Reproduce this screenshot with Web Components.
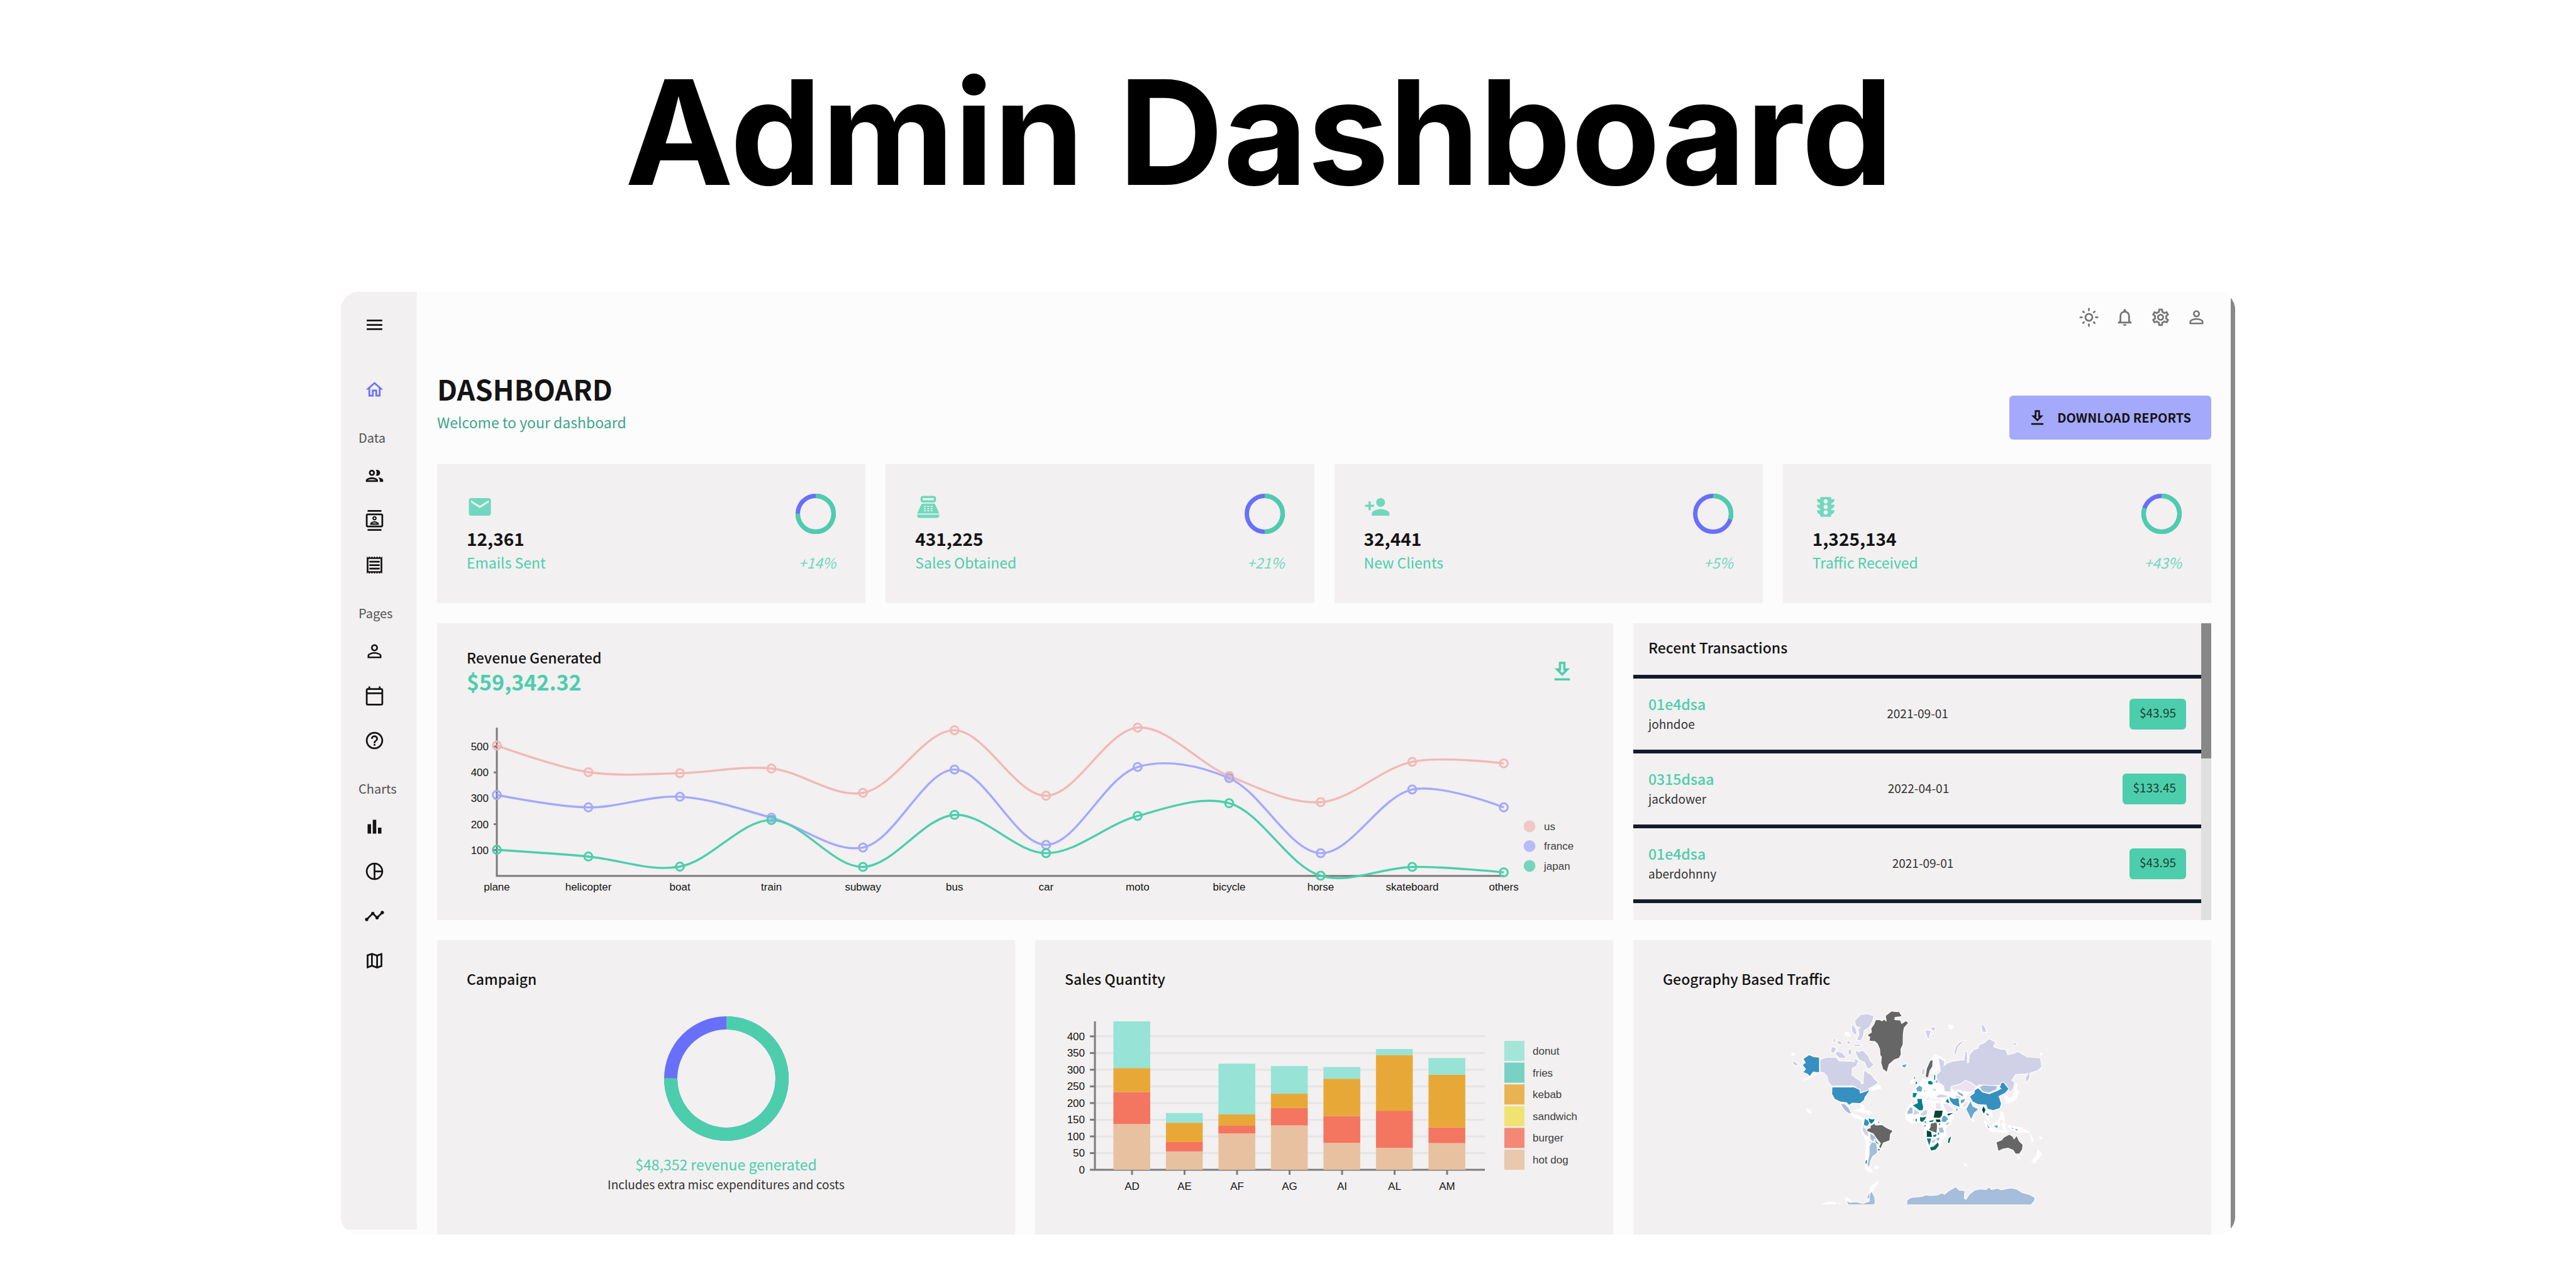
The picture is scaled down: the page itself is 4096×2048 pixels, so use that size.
<!DOCTYPE html>
<html lang="en">
<head>
<meta charset="utf-8">
<title>Admin Dashboard</title>
<style>
  html { background: #ffffff; }
  body { margin: 0; font-family: "Noto Sans CJK JP", "Noto Sans", sans-serif; color: #141414; }
</style>
</head>
<body>
<dashboard-page></dashboard-page>

<script>
const ICONS = {
  menu: 'M3 18h18v-2H3v2zm0-5h18v-2H3v2zm0-7v2h18V6H3z',
  home: 'm12 5.69 5 4.5V18h-2v-6H9v6H7v-7.81l5-4.5M12 3 2 12h3v8h6v-6h2v6h6v-8h3L12 3z',
  people: 'M9 13.75c-2.34 0-7 1.17-7 3.5V19h14v-1.75c0-2.33-4.66-3.5-7-3.5zM4.34 17c.84-.58 2.87-1.25 4.66-1.25s3.82.67 4.66 1.25H4.34zM9 12c1.93 0 3.5-1.57 3.5-3.5S10.93 5 9 5 5.5 6.57 5.5 8.5 7.07 12 9 12zm0-5c.83 0 1.5.67 1.5 1.5S9.83 10 9 10s-1.5-.67-1.5-1.5S8.17 7 9 7zm7.04 6.81c1.16.84 1.96 1.96 1.96 3.44V19h4v-1.75c0-2.02-3.5-3.17-5.96-3.44zM15 12c1.93 0 3.5-1.57 3.5-3.5S16.93 5 15 5c-.54 0-1.04.13-1.5.35.63.89 1 1.98 1 3.15s-.37 2.26-1 3.15c.46.22.96.35 1.5.35z',
  contacts: 'M20 4H4c-1.1 0-2 .9-2 2v12c0 1.1.9 2 2 2h16c1.1 0 2-.9 2-2V6c0-1.1-.9-2-2-2zm0 14H4V6h16v12zM4 0h16v2H4zm0 22h16v2H4zm8-10c1.38 0 2.5-1.12 2.5-2.5S13.38 7 12 7 9.5 8.12 9.5 9.5 10.62 12 12 12zm0-3.5c.55 0 1 .45 1 1s-.45 1-1 1-1-.45-1-1 .45-1 1-1zm5 7.49C17 13.9 13.69 13 12 13s-5 .9-5 2.99V17h10v-1.01zm-8.19-.49c.61-.52 2.03-1 3.19-1 1.17 0 2.59.48 3.2 1H8.81z',
  receipt: 'M19.5 3.5 18 2l-1.5 1.5L15 2l-1.5 1.5L12 2l-1.5 1.5L9 2 7.5 3.5 6 2 4.5 3.5 3 2v20l1.5-1.5L6 22l1.5-1.5L9 22l1.5-1.5L12 22l1.5-1.5L15 22l1.5-1.5L18 22l1.5-1.5L21 22V2l-1.5 1.5zM19 19.09H5V4.91h14v14.18zM6 15h12v2H6zm0-4h12v2H6zm0-4h12v2H6z',
  person: 'M12 5.9c1.16 0 2.1.94 2.1 2.1s-.94 2.1-2.1 2.1S9.9 9.16 9.9 8s.94-2.1 2.1-2.1m0 9c2.97 0 6.1 1.46 6.1 2.1v1.1H5.9V17c0-.64 3.13-2.1 6.1-2.1M12 4C9.79 4 8 5.79 8 8s1.79 4 4 4 4-1.79 4-4-1.79-4-4-4zm0 9c-2.67 0-8 1.34-8 4v3h16v-3c0-2.66-5.33-4-8-4z',
  calendar: 'M20 3h-1V1h-2v2H7V1H5v2H4c-1.1 0-2 .9-2 2v16c0 1.1.9 2 2 2h16c1.1 0 2-.9 2-2V5c0-1.1-.9-2-2-2zm0 18H4V10h16v11zm0-13H4V5h16v3z',
  help: 'M11 18h2v-2h-2v2zm1-16C6.48 2 2 6.48 2 12s4.48 10 10 10 10-4.48 10-10S17.52 2 12 2zm0 18c-4.41 0-8-3.59-8-8s3.59-8 8-8 8 3.59 8 8-3.59 8-8 8zm0-14c-2.21 0-4 1.79-4 4h2c0-1.1.9-2 2-2s2 .9 2 2c0 2-3 1.75-3 5h2c0-2.25 3-2.5 3-5 0-2.21-1.79-4-4-4z',
  bars: 'M4 9h4v11H4zm12 4h4v7h-4zm-6-9h4v16h-4z',
  pie: 'M12 2C6.48 2 2 6.48 2 12s4.48 10 10 10 10-4.48 10-10S17.52 2 12 2zm1 2.07c3.61.45 6.48 3.33 6.93 6.93H13V4.07zM4 12c0-4.06 3.07-7.44 7-7.93v15.87c-3.93-.5-7-3.88-7-7.94zm9 7.93V13h6.93c-.45 3.61-3.32 6.48-6.93 6.93z',
  timeline: 'M23 8c0 1.1-.9 2-2 2-.18 0-.35-.02-.51-.07l-3.56 3.55c.05.16.07.34.07.52 0 1.1-.9 2-2 2s-2-.9-2-2c0-.18.02-.36.07-.52l-2.55-2.55c-.16.05-.34.07-.52.07s-.36-.02-.52-.07l-4.55 4.56c.05.16.07.33.07.51 0 1.1-.9 2-2 2s-2-.9-2-2 .9-2 2-2c.18 0 .35.02.51.07l4.56-4.55C8.02 9.36 8 9.18 8 9c0-1.1.9-2 2-2s2 .9 2 2c0 .18-.02.36-.07.52l2.55 2.55c.16-.05.34-.07.52-.07s.36.02.52.07l3.55-3.56C19.02 8.35 19 8.18 19 8c0-1.1.9-2 2-2s2 .9 2 2z',
  map: 'M20.5 3l-.16.03L15 5.1 9 3 3.36 4.9c-.21.07-.36.25-.36.48V20.5c0 .28.22.5.5.5l.16-.03L9 18.9l6 2.1 5.64-1.9c.21-.07.36-.25.36-.48V3.5c0-.28-.22-.5-.5-.5zM10 5.47l4 1.4v11.66l-4-1.4V5.47zm-5 .99l3-1.01v11.7l-3 1.16V6.46zm14 11.08l-3 1.01V6.86l3-1.16v11.84z',
  sun: 'M12 9c1.65 0 3 1.35 3 3s-1.35 3-3 3-3-1.35-3-3 1.35-3 3-3m0-2c-2.76 0-5 2.24-5 5s2.24 5 5 5 5-2.24 5-5-2.24-5-5-5zM2 13h2c.55 0 1-.45 1-1s-.45-1-1-1H2c-.55 0-1 .45-1 1s.45 1 1 1zm18 0h2c.55 0 1-.45 1-1s-.45-1-1-1h-2c-.55 0-1 .45-1 1s.45 1 1 1zM11 2v2c0 .55.45 1 1 1s1-.45 1-1V2c0-.55-.45-1-1-1s-1 .45-1 1zm0 18v2c0 .55.45 1 1 1s1-.45 1-1v-2c0-.55-.45-1-1-1s-1 .45-1 1zM5.99 4.58c-.39-.39-1.03-.39-1.41 0-.39.39-.39 1.03 0 1.41l1.06 1.06c.39.39 1.03.39 1.41 0s.39-1.03 0-1.41L5.99 4.58zm12.37 12.37c-.39-.39-1.03-.39-1.41 0-.39.39-.39 1.03 0 1.41l1.06 1.06c.39.39 1.03.39 1.41 0 .39-.39.39-1.03 0-1.41l-1.06-1.06zm1.06-10.96c.39-.39.39-1.03 0-1.41-.39-.39-1.03-.39-1.41 0l-1.06 1.06c-.39.39-.39 1.03 0 1.41s1.03.39 1.41 0l1.06-1.06zM7.05 18.36c.39-.39.39-1.03 0-1.41-.39-.39-1.03-.39-1.41 0l-1.06 1.06c-.39.39-.39 1.03 0 1.41s1.03.39 1.41 0l1.06-1.06z',
  bell: 'M12 22c1.1 0 2-.9 2-2h-4c0 1.1.9 2 2 2zm6-6v-5c0-3.07-1.63-5.64-4.5-6.32V4c0-.83-.67-1.5-1.5-1.5s-1.5.67-1.5 1.5v.68C7.64 5.36 6 7.92 6 11v5l-2 2v1h16v-1l-2-2zm-2 1H8v-6c0-2.48 1.51-4.5 4-4.5s4 2.02 4 4.5v6z',
  gear: 'M19.43 12.98c.04-.32.07-.64.07-.98 0-.34-.03-.66-.07-.98l2.11-1.65c.19-.15.24-.42.12-.64l-2-3.46c-.09-.16-.26-.25-.44-.25-.06 0-.12.01-.17.03l-2.49 1c-.52-.4-1.08-.73-1.69-.98l-.38-2.65C14.46 2.18 14.25 2 14 2h-4c-.25 0-.46.18-.49.42l-.38 2.65c-.61.25-1.17.59-1.69.98l-2.49-1c-.06-.02-.12-.03-.18-.03-.17 0-.34.09-.43.25l-2 3.46c-.13.22-.07.49.12.64l2.11 1.65c-.04.32-.07.65-.07.98 0 .33.03.66.07.98l-2.11 1.65c-.19.15-.24.42-.12.64l2 3.46c.09.16.26.25.44.25.06 0 .12-.01.17-.03l2.49-1c.52.4 1.08.73 1.69.98l.38 2.65c.03.24.24.42.49.42h4c.25 0 .46-.18.49-.42l.38-2.65c.61-.25 1.17-.59 1.69-.98l2.49 1c.06.02.12.03.18.03.17 0 .34-.09.43-.25l2-3.46c.12-.22.07-.49-.12-.64l-2.11-1.65zm-1.98-1.71c.04.31.05.52.05.73 0 .21-.02.43-.05.73l-.14 1.13.89.7 1.08.84-.7 1.21-1.27-.51-1.04-.42-.9.68c-.43.32-.84.56-1.25.73l-1.06.43-.16 1.13-.2 1.35h-1.4l-.19-1.35-.16-1.13-1.06-.43c-.43-.18-.83-.41-1.23-.71l-.91-.7-1.06.43-1.27.51-.7-1.21 1.08-.84.89-.7-.14-1.13c-.03-.31-.05-.54-.05-.74s.02-.43.05-.73l.14-1.13-.89-.7-1.08-.84.7-1.21 1.27.51 1.04.42.9-.68c.43-.32.84-.56 1.25-.73l1.06-.43.16-1.13.2-1.35h1.39l.19 1.35.16 1.13 1.06.43c.43.18.83.41 1.23.71l.91.7 1.06-.43 1.27-.51.7 1.21-1.07.85-.89.7.14 1.13zM12 8c-2.21 0-4 1.79-4 4s1.79 4 4 4 4-1.79 4-4-1.79-4-4-4zm0 6c-1.1 0-2-.9-2-2s.9-2 2-2 2 .9 2 2-.9 2-2 2z',
  download: 'M19 9h-4V3H9v6H5l7 7 7-7zm-8 2V5h2v6h1.17L12 13.17 9.83 11H11zm-6 7h14v2H5z',
  email: 'M20 4H4c-1.1 0-1.99.9-1.99 2L2 18c0 1.1.9 2 2 2h16c1.1 0 2-.9 2-2V6c0-1.1-.9-2-2-2zm0 4-8 5-8-5V6l8 5 8-5v2z',
  sale: 'M17 2H7c-1.1 0-2 .9-2 2v2c0 1.1.9 2 2 2h10c1.1 0 2-.9 2-2V4c0-1.1-.9-2-2-2zm0 4H7V4h10v2zm3 16H4c-1.1 0-2-.9-2-2v-1h20v1c0 1.1-.9 2-2 2zm-1.47-11.81C18.21 9.47 17.49 9 16.7 9H7.3c-.79 0-1.51.47-1.83 1.19L2 18h20l-3.47-7.81zM9.5 16h-1c-.28 0-.5-.22-.5-.5s.22-.5.5-.5h1c.28 0 .5.22.5.5s-.22.5-.5.5zm0-2h-1c-.28 0-.5-.22-.5-.5s.22-.5.5-.5h1c.28 0 .5.22.5.5s-.22.5-.5.5zm0-2h-1c-.28 0-.5-.22-.5-.5s.22-.5.5-.5h1c.28 0 .5.22.5.5s-.22.5-.5.5zm3 4h-1c-.28 0-.5-.22-.5-.5s.22-.5.5-.5h1c.28 0 .5.22.5.5s-.22.5-.5.5zm0-2h-1c-.28 0-.5-.22-.5-.5s.22-.5.5-.5h1c.28 0 .5.22.5.5s-.22.5-.5.5zm0-2h-1c-.28 0-.5-.22-.5-.5s.22-.5.5-.5h1c.28 0 .5.22.5.5s-.22.5-.5.5zm3 4h-1c-.28 0-.5-.22-.5-.5s.22-.5.5-.5h1c.28 0 .5.22.5.5s-.22.5-.5.5zm0-2h-1c-.28 0-.5-.22-.5-.5s.22-.5.5-.5h1c.28 0 .5.22.5.5s-.22.5-.5.5zm0-2h-1c-.28 0-.5-.22-.5-.5s.22-.5.5-.5h1c.28 0 .5.22.5.5s-.22.5-.5.5z',
  addPerson: 'M15 12c2.21 0 4-1.79 4-4s-1.79-4-4-4-4 1.79-4 4 1.79 4 4 4zm-9-2V7H4v3H1v2h3v3h2v-3h3v-2H6zm9 4c-2.67 0-8 1.34-8 4v2h16v-2c0-2.66-5.33-4-8-4z',
  traffic: 'M20 10h-3V8.86c1.72-.45 3-2 3-3.86h-3V4c0-.55-.45-1-1-1H8c-.55 0-1 .45-1 1v1H4c0 1.86 1.28 3.41 3 3.86V10H4c0 1.86 1.28 3.41 3 3.86V15H4c0 1.86 1.28 3.41 3 3.86V20c0 .55.45 1 1 1h8c.55 0 1-.45 1-1v-1.14c1.72-.45 3-2 3-3.86h-3v-1.14c1.72-.45 3-2 3-3.86zm-8 9c-1.11 0-2-.9-2-2s.89-2 2-2c1.1 0 2 .9 2 2s-.89 2-2 2zm0-5c-1.11 0-2-.9-2-2s.89-2 2-2c1.1 0 2 .9 2 2s-.89 2-2 2zm0-5c-1.11 0-2-.9-2-2 0-1.11.89-2 2-2 1.1 0 2 .89 2 2 0 1.1-.89 2-2 2z'
};

const define = (name, render) => customElements.define(name, class extends HTMLElement {
  constructor() {
    super();
    this.attachShadow({ mode: 'open' });
  }
  connectedCallback() {
    const template = document.createElement('template');
    template.innerHTML = '<style>*{box-sizing:border-box}:host{display:block}</style>' + render(this);
    this.shadowRoot.replaceChildren(template.content.cloneNode(true));
  }
});

define('app-icon', el => `
  <style>
    :host { display: block; flex: none; width: var(--icon-size, 33px); height: var(--icon-size, 33px); }
    svg { display: block; width: 100%; height: 100%; fill: currentColor; }
  </style>
  <svg viewBox="0 0 24 24" aria-hidden="true"><path d="${ICONS[el.getAttribute('name')]}"/></svg>`);

/* Ring whose green share starts at twelve o'clock and runs clockwise. */
define('progress-ring', el => {
  const size = +el.getAttribute('size');
  const band = +el.getAttribute('band');
  const share = +el.getAttribute('share');
  const r = (size - band) / 2;
  const c = 2 * Math.PI * r;
  return `
  <style>
    :host { width: ${size}px; height: ${size}px; flex: none; }
    svg { display: block; fill: none; stroke-width: ${band}px; }
  </style>
  <svg width="${size}" height="${size}" viewBox="0 0 ${size} ${size}" aria-hidden="true">
    <circle cx="${size / 2}" cy="${size / 2}" r="${r}" stroke="#6870fa"/>
    <circle cx="${size / 2}" cy="${size / 2}" r="${r}" stroke="#4cceac"
      stroke-dasharray="${c * share} ${c}" transform="rotate(-90 ${size / 2} ${size / 2})"/>
  </svg>`;
});

define('side-nav', () => {
  const link = (icon, label, active) =>
    `<a href="#" aria-label="${label}"${active ? ' class="active"' : ''}><app-icon name="${icon}"></app-icon></a>`;
  return `
  <style>
    :host { width: 121px; flex: none; background: #f2f0f0; margin-bottom: 8px; }
    nav { display: flex; flex-direction: column; padding-top: 17px; }
    button, a { display: flex; align-items: center; height: 71px; padding: 0 0 0 37px; margin: 0;
      border: 0; background: none; color: #141414; }
    button { margin-bottom: 32px; }
    .active { color: #6870fa; }
    h6 { margin: 0; height: 66px; padding: 22px 0 0 28px; font-size: 20px; line-height: 38px;
      font-weight: 400; color: #525252; }
  </style>
  <nav aria-label="Main">
    <button type="button" aria-label="Collapse menu"><app-icon name="menu"></app-icon></button>
    ${link('home', 'Home', true)}
    <h6>Data</h6>
    ${link('people', 'Team')}${link('contacts', 'Contacts')}${link('receipt', 'Invoices')}
    <h6>Pages</h6>
    ${link('person', 'Profile')}${link('calendar', 'Calendar')}${link('help', 'Help')}
    <h6>Charts</h6>
    ${link('bars', 'Bar chart')}${link('pie', 'Pie chart')}${link('timeline', 'Line chart')}${link('map', 'Geography')}
  </nav>`;
});

define('top-bar', () => `
  <style>
    :host { display: flex; justify-content: flex-end; padding: 12px 26px 0 0; }
    button { border: 0; margin: 0; background: none; padding: 12px; color: #757575; }
  </style>
  <button type="button" aria-label="Theme"><app-icon name="sun"></app-icon></button>
  <button type="button" aria-label="Notifications"><app-icon name="bell"></app-icon></button>
  <button type="button" aria-label="Settings"><app-icon name="gear"></app-icon></button>
  <button type="button" aria-label="Account"><app-icon name="person"></app-icon></button>`);

define('page-header', () => `
  <style>
    :host { display: flex; justify-content: space-between; align-items: flex-end; }
    h2 { margin: 0; font-size: 45px; line-height: 64px; font-weight: 700; color: #141414; }
    p { margin: 3px 0 10px; font-size: 23px; line-height: 36px; color: #3da58a; }
    button { display: flex; align-items: center; gap: 15px; height: 70px; padding: 0 32px 0 28px; border: 0;
      border-radius: 6px; background: #a4a9fc; color: #141414; font: 700 20px/34px "Noto Sans CJK JP", sans-serif; }
  </style>
  <div>
    <h2><slot name="title"></slot></h2>
    <p><slot name="subtitle"></slot></p>
  </div>
  <button type="button"><app-icon name="download"></app-icon><slot name="action"></slot></button>`);

define('stat-card', el => `
  <style>
    :host { display: flex; justify-content: space-between; align-items: center; grid-column: span 3;
      padding: 0 47px; background: #f2f0f0; }
    div { display: flex; flex-direction: column; }
    app-icon { --icon-size: 42px; color: #70d8bd; margin-bottom: 9px; }
    strong { font-size: 28px; line-height: 40px; font-weight: 700; color: #141414; }
    span { font-size: 23px; line-height: 36px; color: #4cceac; }
    .right { align-items: flex-end; gap: 27px; }
    em { font-size: 23px; line-height: 36px; color: #70d8bd; }
  </style>
  <div>
    <app-icon name="${el.getAttribute('icon')}"></app-icon>
    <strong>${el.getAttribute('value')}</strong>
    <span><slot></slot></span>
  </div>
  <div class="right">
    <progress-ring size="64" band="7" share="${el.getAttribute('share')}"></progress-ring>
    <em>${el.getAttribute('increase')}</em>
  </div>`);

define('panel-card', () => `
  <style>
    :host { display: flex; flex-direction: column; grid-column: span 4; background: #f2f0f0; }
    h5 { margin: 0; padding: 45px 47px 1px; font-size: 23px; line-height: 32px; font-weight: 500; color: #141414; }
  </style>
  <h5><slot name="heading"></slot></h5>
  <slot></slot>`);

/* Centripetal Catmull-Rom spline written as cubic segments. */
const spline = pts => {
  const dist = (a, b) => Math.hypot(a[0] - b[0], a[1] - b[1]);
  let d = `M${pts[0]}`;
  for (let i = 0; i < pts.length - 1; i++) {
    const p0 = pts[i - 1] || pts[i], p1 = pts[i], p2 = pts[i + 1], p3 = pts[i + 2] || p2;
    const l1 = dist(p0, p1), l2 = dist(p1, p2), l3 = dist(p2, p3);
    const a1 = Math.sqrt(l1), a2 = Math.sqrt(l2), a3 = Math.sqrt(l3);
    const c1 = [0, 1].map(k => l1 < 1e-6 ? p1[k]
      : (p1[k] * (2 * l1 + 3 * a1 * a2 + l2) - p0[k] * l2 + p2[k] * l1) / (3 * a1 * (a1 + a2)));
    const c2 = [0, 1].map(k => l3 < 1e-6 ? p2[k]
      : (p2[k] * (2 * l3 + 3 * a3 * a2 + l2) + p1[k] * l3 - p3[k] * l2) / (3 * a3 * (a3 + a2)));
    d += `C${c1} ${c2} ${p2}`;
  }
  return d;
};

const CHART_STYLE = `
  svg { display: block; width: 100%; font-family: "Liberation Sans", sans-serif; font-size: 17px; }
  text { fill: #141414; }
  .legend text { fill: #404040; }
  .axis { stroke: #7c7c7c; stroke-width: 3px; fill: none; }
  .grid { stroke: #e5e5e5; stroke-width: 3px; }
  .mid { text-anchor: middle; }
  .end { text-anchor: end; }`;

define('line-chart', () => {
  const names = ['plane', 'helicopter', 'boat', 'train', 'subway', 'bus', 'car', 'moto', 'bicycle', 'horse', 'skateboard', 'others'];
  const series = [
    ['us', '#f1b9b7', [504, 401, 397, 415, 321, 563, 310, 573, 386, 285, 441, 435]],
    ['france', '#a4a9fc', [313, 265, 306, 225, 110, 411, 120, 421, 378, 88, 334, 265]],
    ['japan', '#4cceac', [101, 75, 36, 216, 35, 236, 88, 232, 281, 1, 35, 14]]
  ];
  const left = 95, right = 1697, base = 286, unit = 236 / 573;
  const x = i => left + i * (right - left) / 11;
  const y = v => base - v * unit;
  return `
  <style>${CHART_STYLE}</style>
  <svg viewBox="0 0 1871 356" role="img" aria-label="Revenue by transport and country">
    <path class="axis" d="M${left} 50V${base}H${right}"/>
    ${[100, 200, 300, 400, 500].map(v => `
      <path class="axis" d="M${left - 5} ${y(v)}h5"/>
      <text class="end" x="${left - 13}" y="${y(v) + 6}">${v}</text>`).join('')}
    ${names.map((n, i) => `<text class="mid" x="${x(i)}" y="309">${n}</text>`).join('')}
    ${series.map(([, colour, values]) => {
      const pts = values.map((v, i) => [x(i), y(v)]);
      return `<path d="${spline(pts)}" fill="none" stroke="${colour}" stroke-width="3.4"/>`;
    }).join('')}
    ${series.map(([, colour, values]) => values.map((v, i) =>
      `<circle cx="${x(i)}" cy="${y(v)}" r="6.4" fill="none" stroke="${colour}" stroke-width="3"/>`).join('')).join('')}
    <g class="legend">
      ${series.map(([n, colour], i) => `
        <circle cx="1738" cy="${207 + i * 31.5}" r="9.4" fill="${colour}" opacity=".75"/>
        <text x="1761" y="${213 + i * 31.5}">${n}</text>`).join('')}
    </g>
  </svg>`;
});

define('bar-chart', () => {
  const colours = { 'hot dog': '#e8c1a0', burger: '#f47560', sandwich: '#f1e15b', kebab: '#e8a838', fries: '#61cdbb', donut: '#97e3d5' };
  const data = { AD: [137, 96, 72, 140], AE: [55, 28, 58, 29], AF: [109, 23, 34, 152], AG: [133, 52, 43, 83],
    AI: [81, 80, 112, 35], AL: [66, 111, 167, 18], AM: [80, 47, 158, 50] };
  const fills = ['hot dog', 'burger', 'kebab', 'donut'].map(k => colours[k]);
  const left = 95, right = 715, base = 287, unit = 236 / 445;
  const y = v => base - v * unit;
  const ticks = [0, 50, 100, 150, 200, 250, 300, 350, 400];
  return `
  <style>${CHART_STYLE}</style>
  <svg viewBox="0 0 919 389" role="img" aria-label="Sales quantity by country">
    ${ticks.slice(1).map(v => `<path class="grid" d="M${left} ${y(v)}H${right}"/>`).join('')}
    <path class="axis" d="M${left} 51V${base}H${right}"/>
    ${Object.values(data).map((values, i) => {
      let sum = 0;
      return values.map((v, k) => {
        sum += v;
        return `<rect x="${124.4 + i * 83.5}" y="${y(sum)}" width="58.5" height="${v * unit}" fill="${fills[k]}"/>`;
      }).join('');
    }).join('')}
    ${ticks.map(v => `
      <path class="axis" d="M${left} ${y(v)}h-8"/>
      <text class="end" x="${left - 16}" y="${y(v) + 6}">${v}</text>`).join('')}
    ${Object.keys(data).map((n, i) => `
      <path class="axis" d="M${154 + i * 83.5} ${base}v8"/>
      <text class="mid" x="${154 + i * 83.5}" y="319">${n}</text>`).join('')}
    <g class="legend">
      ${Object.entries(colours).reverse().map(([n, colour], i) => `
        <rect x="746" y="${82 + i * 34.6}" width="32" height="32" fill="${colour}" opacity=".85"/>
        <text x="791" y="${104 + i * 34.6}">${n}</text>`).join('')}
    </g>
  </svg>`;
});

define('world-map', () => {
  const land = {
    '#ffffff': 'M750 780L800 750L820 770L900 778L925 850L940 855L945 880L925 925L905 945L908 1000L885 1030L880 1075L845 1100L830 1080L812 1000L805 920L790 912L745 912L722 885L727 830ZM755 715L775 670L800 640L800 625L822 638L850 620L865 600L905 665L930 680L985 700L1020 712L1000 740L990 760L1010 775L1000 812L980 812L930 775L905 760L900 780L890 760L868 750L840 752L830 735L815 745L795 722L775 752L750 750ZM845 490L860 470L905 500L900 515L870 500ZM465 853L500 870L525 890L518 895L480 875ZM485 833L510 825L558 846L548 853L520 843ZM510 798l14 2l2 25l-8 -5ZM550 885L605 915L600 930L560 920ZM525 900L520 955L545 1015L555 1030L545 1190L565 1238L545 1235L533 1200L540 1050L515 960ZM243 635L268 610L298 600L262 625ZM258 825l14 10l5 14l-10 -6ZM1100 835L1120 845L1125 870L1105 880L1112 905L1095 880ZM1090 905L1130 960L1195 970L1190 980L1120 968L1095 930ZM1130 925L1155 905L1160 940L1145 955L1130 945ZM1170 920l18 0l-5 20l8 18l-14 -8ZM1165 845L1178 850L1182 905L1170 885L1155 900L1168 870ZM1200 935L1260 950L1300 978L1280 972L1245 972L1215 955ZM1240 660L1235 700L1248 710L1235 760L1200 782L1190 765L1222 750L1232 705ZM1185 730l12 10l0 25l-10 -5ZM1340 1095L1356 1120L1325 1175L1312 1168L1335 1130ZM580 1200l12 5l-4 10l-12 -2ZM1306 1000l12 30l-6 8ZM1350 1008l8 4l-8 8ZM330 1450L365 1435L415 1450L412 1455L330 1455ZM555 1365L558 1340L592 1303L575 1335L568 1360ZM440 1410l20 8l5 20l-20 -8ZM922 275l20 0l-2 18l-12 5ZM190 458l12 2l-4 10l-8 -2ZM585 670l15 5l4 15l-18 -5ZM548 695L580 680L588 690L560 700ZM1000 1185l6 6l-8 4ZM1352 458l8 5l-8 6ZM745 640l10 -8l-2 22l-8 0ZM440 320L455 325L460 345L440 338ZM1035 895l6 8l-8 0ZM1245 1135l8 10l-6 6Z',
    '#fff7fb': 'M850 495L868 498L872 560L850 588L845 550ZM808 785L855 785L855 888L832 882L820 830L805 815ZM855 660L885 660L903 672L890 690L865 680ZM800 645L820 645L822 665L805 670Z',
    '#ece2f0': 'M932 678L978 660L985 640L1000 632L1030 655L1052 675L1040 700L1020 712L985 705L965 695L950 708ZM862 785h20l5 38h-25ZM895 790L915 787L945 825L940 838L915 848L905 820ZM985 805L1000 780L1012 773L1008 800L990 814ZM752 890l8 -5l2 18l-8 0Z',
    '#d0d1e6': 'M512 205L545 200L572 215L565 245L550 285L525 308L522 345L510 374L493 368L505 335L500 300L512 290L490 278L483 245ZM470 270L485 290L492 320L485 337L470 312ZM322 500L350 487L395 487L410 510L460 512L495 515L490 540L470 555L468 600L490 625L508 640L514 662L524 658L524 620L528 570L545 590L560 600L575 630L592 650L570 672L545 690L555 697L530 715L512 725L505 700L480 670L375 670L360 645L355 610L340 585L322 580ZM487 440L500 450L520 440L545 475L555 510L572 530L550 560L540 550L530 515L505 500L490 465ZM400 445L425 458L442 488L412 490L393 462ZM376 416L396 425L385 455L372 450ZM480 400L515 403L500 412L480 408ZM410 375L425 395L410 400L400 385ZM385 365l8 0l-5 18l-8 2ZM450 375l12 10l-4 15l-10 -8ZM455 430l12 8l-2 30l-12 -8ZM480 495l15 5l6 20l-15 -5ZM192 510L205 515L218 530L210 540L198 530ZM812 308L838 310L827 368ZM838 288l20 0l0 15l-10 8ZM845 335l10 10l-6 10ZM797 590L800 565L810 558L808 590L800 600ZM1078 268L1090 285L1098 315L1082 318L1076 290ZM1102 322l10 6l-4 14ZM1224 388l16 8l-12 10ZM875 490L902 510L898 545L915 525L940 512L975 505L995 505L1000 450L1008 445L1008 525L1018 515L1020 470L1040 435L1060 428L1065 405L1090 390L1110 365L1140 385L1130 415L1160 432L1188 435L1197 470L1230 460L1245 448L1290 485L1350 490L1356 545L1340 568L1305 585L1280 592L1235 595L1215 635L1230 650L1222 690L1210 712L1200 690L1190 655L1175 650L1160 665L1110 670L1065 662L1052 675L1030 650L1000 632L980 655L932 675L930 712L903 705L900 672L868 640L866 600L885 575L880 530ZM1300 580L1300 620L1285 648L1282 620ZM948 462L955 415L972 388L997 373L965 415L955 465ZM866 740L880 728L915 736L912 746L870 748ZM955 735L980 745L975 755L955 745ZM748 787L768 763L758 785ZM758 865L762 822L785 850L770 860ZM790 860L812 828L822 838L818 862L800 870ZM522 940L540 962L548 1005L530 990L518 960ZM845 1030l12 -8l5 10l-12 18l-8 -5ZM848 690l14 2l0 10l-12 0ZM530 935l-8 8l-4 -8Z',
    '#a6bddb': 'M1068 680L1085 668L1148 675L1145 695L1110 716L1080 707ZM418 790L435 792L455 820L466 853L450 848L430 820ZM730 840L742 813L753 815V852L728 857ZM875 945h18l8 32l-22 3ZM865 1015l14 -5l0 18l-12 5ZM555 985L578 1005L582 1022L565 1037L556 1015ZM562 1043L583 1045L588 1110L565 1135L555 1165L550 1203L542 1190L552 1120L552 1070ZM860 640l8 -8l6 18l-12 2ZM728 1453L728 1425L745 1408L800 1400L815 1390L835 1395L870 1392L890 1378L902 1387L925 1362L955 1338L970 1358L996 1363L993 1410L1003 1422L1020 1385L1045 1358L1070 1352L1098 1355L1110 1340L1122 1355L1150 1347L1168 1357L1212 1345L1240 1352L1265 1375L1300 1388L1325 1408L1320 1430L1305 1453ZM445 1428L460 1440L490 1436L520 1447L552 1432L555 1380L562 1368L575 1405L577 1440L570 1453L455 1453ZM540 1415L550 1375L552 1405ZM398 1448l10 0l2 5l-12 0Z',
    '#67a9cf': 'M706 535l20 -5l-8 22l-12 -7ZM770 688L785 670L798 682L795 710L775 708ZM1024 775L1035 808L1060 825L1040 850L1027 890L1017 860L1005 825ZM978 765L1000 757L992 780L980 787ZM960 708L988 728L990 742L972 728ZM895 870L905 868L920 890L905 910L888 905ZM910 920l18 -12l-15 22ZM1098 850l14 8l-6 10l-8 -6ZM1133 935l20 -5l-5 20ZM1215 945l10 5l-2 8ZM1232 955l14 3l-6 10ZM1100 925L1115 948L1108 948ZM806 905l12 0l-2 16ZM808 700l6 6l-4 6Z',
    '#3690c0': 'M270 470L290 482L316 487L316 583L288 578L272 606L262 592L243 582L255 562L240 535L254 520L243 495ZM378 682L480 682L505 698L508 722L552 700L530 745L525 765L508 785L470 783L457 797L445 780L415 775L390 757L377 725ZM530 888L545 900L552 915L540 937L525 928ZM1060 688L1080 715L1112 726L1150 705L1170 690L1162 682L1168 655L1178 650L1202 692L1185 718L1155 740L1162 765L1167 790L1160 818L1130 832L1105 822L1098 795L1060 792L1035 775L1022 742L1042 722L1045 700ZM925 745L945 758L968 752L973 810L945 795L930 772Z',
    '#02818a': 'M775 757L797 758L798 785L803 810L800 832L785 833L755 800L778 785ZM755 718L775 720L765 748L754 746ZM825 643L838 638L848 650L846 662L828 662ZM548 885L562 893L577 890L572 905L560 922L550 905ZM820 1018h20l-4 25l-5 20ZM575 1025L598 1057L585 1048ZM590 1088l10 -2l-3 14ZM850 995l16 -5l-4 16l-12 0ZM870 980l8 0l-2 18ZM832 902l20 -6l-4 12l-16 2ZM876 918l8 4l-6 10ZM908 775l10 -20l8 30l-10 -3ZM958 825l6 -4l-4 20ZM760 610l6 12l-4 4ZM770 640l6 16l-10 4ZM855 598l5 5l-2 30l-4 0ZM553 1038l4 4l-4 4ZM535 1160l5 2l-2 22l-5 -2ZM808 930l8 2l-6 10ZM592 905l6 6l-3 8Z',
    '#016c59': 'M788 877L800 880L817 873L810 895L797 910L788 900ZM835 1075L852 1070L872 1043L876 1062L862 1090L840 1097ZM934 1003L925 1047L918 1047L922 1018Z',
    '#014636': 'M858 835H894L890 868L880 882L852 880ZM862 893l20 0l2 16l-20 2ZM820 965l20 8l4 34l-24 0ZM1085 806l9 24l-7 24l-9 -24ZM916 855l28 -5l-24 18ZM768 888l4 0l0 18l-4 0Z',
    '#666666': 'M655 183L672 186L690 187L702 214L670 220L668 240L695 242L702 266L722 247L732 258L712 290L708 330L707 400L697 430L698 465L690 488L668 498L642 530L632 580L615 560L607 520L609 480L603 470L601 430L590 395L578 378L552 375L555 350L543 340L563 320L560 295L573 270L582 240L600 240L610 248L620 238L632 250L628 212ZM575 922L580 932L610 930L630 948L659 968L648 990L645 1030L615 1045L604 1082L597 1072L605 1050L585 1015L570 985L541 968L543 955L557 950L557 935ZM836 508L847 503L845 545L833 570L825 617L815 612L820 560ZM838 920L865 912L868 935L865 980L830 962L838 940ZM1146 1043L1170 1030L1182 1010L1206 993L1220 1005L1228 1025L1240 1002L1250 1035L1268 1060L1265 1090L1252 1117L1235 1117L1225 1093L1200 1078L1175 1085L1155 1098Z'
  };
  return `
  <style>
    svg { display: block; width: 100%; }
    path { stroke: #ffffff; stroke-width: 2.4px; stroke-linejoin: round; vector-effect: non-scaling-stroke; paint-order: stroke; }
  </style>
  <svg viewBox="0 0 919 389" role="img" aria-label="World map of traffic">
    <clipPath id="sheet"><rect x="200" y="0" width="560" height="342"/></clipPath>
    <g clip-path="url(#sheet)">
      <g transform="translate(188 -9) scale(.34 .242)">
        ${Object.entries(land).map(([fill, d]) => `<path fill="${fill}" d="${d}"/>`).join('')}
      </g>
    </g>
  </svg>`;
});

define('revenue-panel', () => `
  <style>
    :host { grid-column: span 8; background: #f2f0f0; }
    header { display: flex; justify-content: space-between; align-items: center; padding: 38px 60px 0 47px; }
    h5 { margin: 0; font-size: 23px; line-height: 32px; font-weight: 500; color: #141414; }
    strong { display: block; font-size: 34px; line-height: 46px; font-weight: 700; color: #4cceac; }
    button { border: 0; padding: 0; background: none; color: #4cceac; --icon-size: 42px; }
  </style>
  <header>
    <div>
      <h5>Revenue Generated</h5>
      <strong>$59,342.32</strong>
    </div>
    <button type="button" aria-label="Download revenue"><app-icon name="download"></app-icon></button>
  </header>
  <line-chart></line-chart>`);

define('transaction-panel', () => {
  const rows = [['01e4dsa', 'johndoe', '2021-09-01', '$43.95'], ['0315dsaa', 'jackdower', '2022-04-01', '$133.45'], ['01e4dsa', 'aberdohnny', '2021-09-01', '$43.95']];
  return `
  <style>
    :host { display: flex; grid-column: span 4; overflow: hidden; background: #f2f0f0; }
    .list { flex: 1; }
    h5 { margin: 0; height: 88px; padding: 22px 24px 0; border-bottom: 6px solid #141b2d;
      font-size: 23px; line-height: 32px; font-weight: 500; color: #141414; }
    ul { list-style: none; margin: 0; padding: 0; }
    li { display: flex; justify-content: space-between; align-items: center; height: 119px;
      padding: 0 24px; border-bottom: 6px solid #141b2d; font-size: 19px; line-height: 30px; color: #333333; }
    div, time { padding-bottom: 4px; }
    .list, .track, .thumb { padding: 0; }
    strong { display: block; font-size: 23px; line-height: 34px; font-weight: 500; color: #4cceac; }
    li > span { height: 49px; padding: 7px 16px 0; border-radius: 6px; background: #4cceac; color: #1c3c33; }
    .track { width: 16px; background: #e0e0e0; }
    .thumb { height: 215px; background: #888888; }
  </style>
  <div class="list">
    <h5>Recent Transactions</h5>
    <ul>${rows.map(([id, user, date, cost]) =>
      `<li><div><strong>${id}</strong>${user}</div><time>${date}</time><span>${cost}</span></li>`).join('')}</ul>
  </div>
  <div class="track"><div class="thumb"></div></div>`;
});

define('campaign-summary', () => `
  <style>
    :host { display: flex; flex-direction: column; align-items: center; padding-top: 43px; }
    strong { margin-top: 19px; font-size: 23px; line-height: 36px; font-weight: 400; color: #4cceac; }
    span { font-size: 19px; line-height: 28px; color: #333333; }
  </style>
  <progress-ring size="198" band="21" share=".75"></progress-ring>
  <strong>$48,352 revenue generated</strong>
  <span>Includes extra misc expenditures and costs</span>`);

define('dashboard-page', () => `
  <style>
    h1 { margin: 0; padding: 70px 92px 0 0; text-align: center; font: 700 231px/280px Inter, sans-serif; color: #000000; }
    .frame { display: flex; margin: 114px 542px 85px; border-radius: 28px; overflow: hidden; background: #fcfcfc; }
    main { flex: 1; display: flex; flex-direction: column; }
    top-bar { margin-bottom: 53px; }
    page-header, .grid { margin: 0 31px 0 32px; }
    .grid { display: grid; grid-template-columns: repeat(12, 1fr); grid-template-rows: 221px 472px 468px;
      gap: 32px; padding-top: 39px; }
    .scroll { width: 7px; background: #888888; }
  </style>
  <h1>Admin Dashboard</h1>
  <div class="frame">
    <side-nav></side-nav>
    <main>
      <top-bar></top-bar>
      <page-header>
        <span slot="title">DASHBOARD</span>
        <span slot="subtitle">Welcome to your dashboard</span>
        <span slot="action">DOWNLOAD REPORTS</span>
      </page-header>
      <div class="grid">
        <stat-card icon="email" value="12,361" increase="+14%" share=".75">Emails Sent</stat-card>
        <stat-card icon="sale" value="431,225" increase="+21%" share=".5">Sales Obtained</stat-card>
        <stat-card icon="addPerson" value="32,441" increase="+5%" share=".3">New Clients</stat-card>
        <stat-card icon="traffic" value="1,325,134" increase="+43%" share=".8">Traffic Received</stat-card>
        <revenue-panel></revenue-panel>
        <transaction-panel></transaction-panel>
        <panel-card><span slot="heading">Campaign</span><campaign-summary></campaign-summary></panel-card>
        <panel-card><span slot="heading">Sales Quantity</span><bar-chart></bar-chart></panel-card>
        <panel-card><span slot="heading">Geography Based Traffic</span><world-map></world-map></panel-card>
      </div>
    </main>
    <div class="scroll"></div>
  </div>`);
</script>
</body>
</html>
